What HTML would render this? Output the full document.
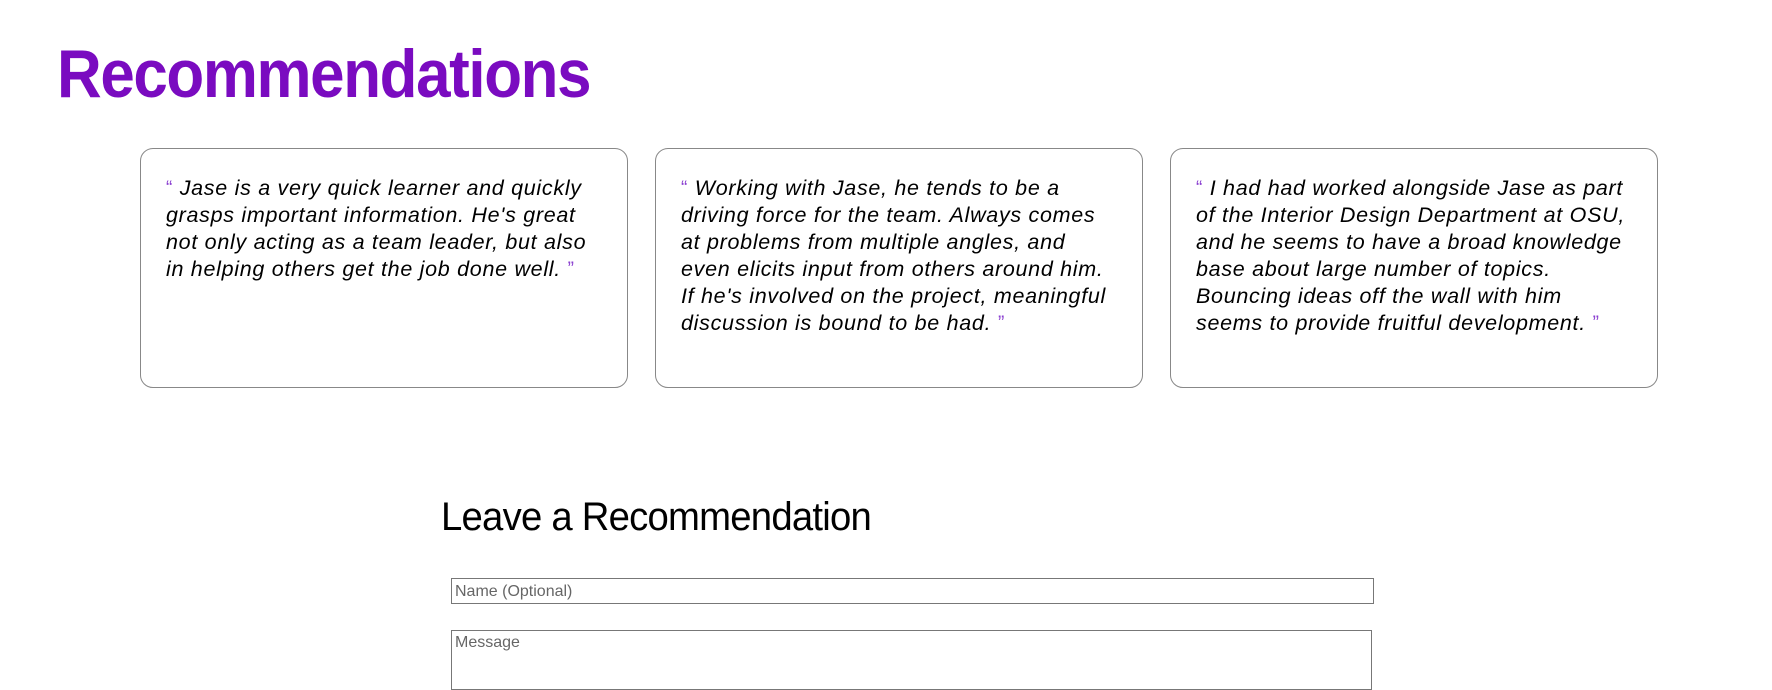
<!DOCTYPE html>
<html><head><meta charset="utf-8"><style>
body{margin:0;background:#fff;width:1772px;height:672px;overflow:hidden;font-family:"Liberation Sans",sans-serif;position:relative}
h1{position:absolute;left:57px;top:34px;margin:0;font-size:68px;line-height:80px;color:#7a0bc0;font-weight:bold;letter-spacing:-1.5px;transform:scaleX(0.91);transform-origin:left}
.card{position:absolute;top:148px;width:486px;height:238px;border:1px solid #888;border-radius:13px;box-sizing:content-box}
.card p{margin:0;position:absolute;left:25px;top:26px;font-style:italic;font-size:21.5px;line-height:27px;color:#000;white-space:nowrap;letter-spacing:0.7px}
.q{color:#8a3fd0;font-size:19px;vertical-align:1px;font-style:normal}
h2{position:absolute;left:441px;top:492px;margin:0;font-weight:normal;font-size:40px;line-height:50px;letter-spacing:-0.8px;transform:scaleX(0.957);transform-origin:left}
.in{position:absolute;left:451px;top:578px;width:923px;height:26px;border:1px solid #777;font-size:16px;color:#666;line-height:26px;padding-left:3px;box-sizing:border-box}
.ta{position:absolute;left:451px;top:630px;width:921px;height:60px;border:1px solid #777;font-size:16px;color:#666;padding:3px;box-sizing:border-box}
</style></head><body>
<h1>Recommendations</h1>
<div class="card" style="left:140px"><p><span class="q">“</span> Jase is a very quick learner and quickly<br>grasps important information. He's great<br>not only acting as a team leader, but also<br>in helping others get the job done well. <span class="q">”</span></p></div>
<div class="card" style="left:655px"><p><span class="q">“</span> Working with Jase, he tends to be a<br>driving force for the team. Always comes<br>at problems from multiple angles, and<br>even elicits input from others around him.<br>If he's involved on the project, meaningful<br>discussion is bound to be had. <span class="q">”</span></p></div>
<div class="card" style="left:1170px"><p><span class="q">“</span> I had had worked alongside Jase as part<br>of the Interior Design Department at OSU,<br>and he seems to have a broad knowledge<br>base about large number of topics.<br>Bouncing ideas off the wall with him<br>seems to provide fruitful development. <span class="q">”</span></p></div>
<h2>Leave a Recommendation</h2>
<div class="in">Name (Optional)</div>
<div class="ta">Message</div>
</body></html>
